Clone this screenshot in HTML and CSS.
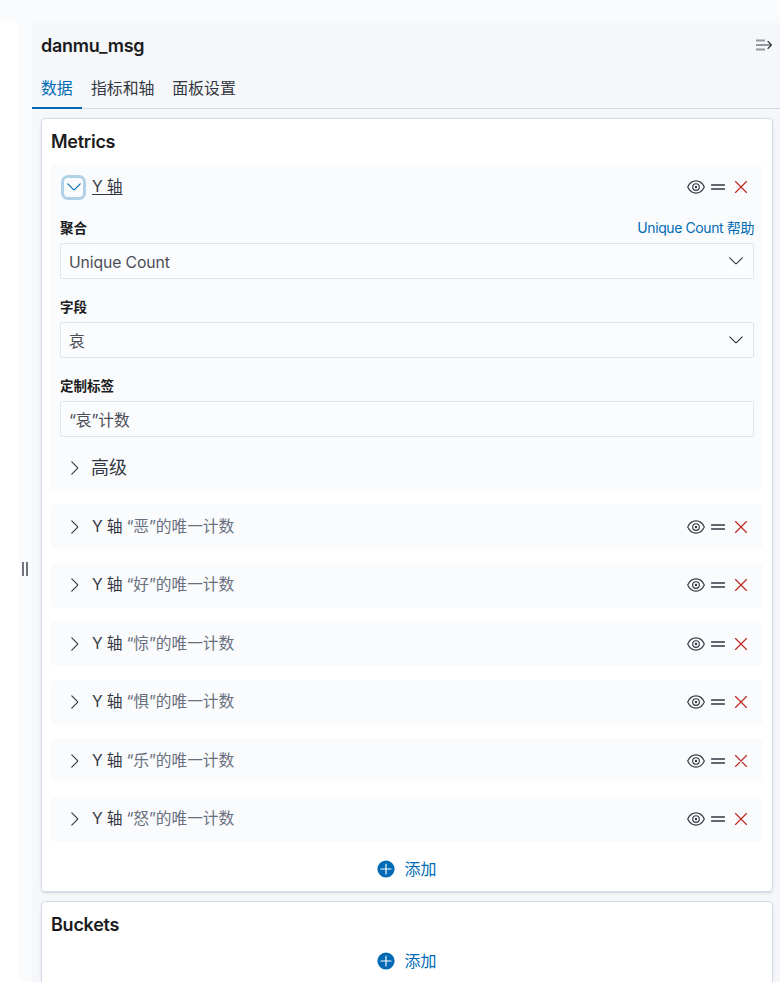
FILE: index.html
```html
<!DOCTYPE html>
<html lang="zh-CN">
<head>
<meta charset="utf-8">
<title>danmu_msg</title>
<link rel="stylesheet" href="styles.css">
</head>
<body>
<svg class="sprite" aria-hidden="true">
  <symbol id="eye" viewBox="0 0 18 18"><path d="M.7 9C2.4 5.2 5.4 2.9 9 2.9S15.600 5.200 17.300 9C15.600 12.800 12.600 15.100 9 15.100S2.400 12.800.7 9Z"/><circle cx="9" cy="9" r="3.300"/><circle cx="9" cy="9" r=".6"/></symbol>
  <symbol id="grab" viewBox="0 0 14 18"><path d="M.5 7h13M.5 11h13"/></symbol>
  <symbol id="cross" viewBox="0 0 12 12"><path d="M.5.5l11 11M11.500.5l-11 11"/></symbol>
  <symbol id="right" viewBox="0 0 8 14"><path d="M.8.8l5.500 5.500q.7.700 0 1.400L.8 13.200"/></symbol>
  <symbol id="down" viewBox="0 0 14 8"><path d="M.8.8l5.500 5.500q.7.700 1.400 0L13.200.8"/></symbol>
  <symbol id="plus" viewBox="0 0 18 18"><circle cx="9" cy="9" r="8.600" fill="#006bb4" stroke="none"/><path d="M9 4v10M4 9h10" stroke="#fff"/></symbol>
</svg>
<div class="page">
  <div class="resizer"><i></i><i></i></div>
  <aside class="sidebar">
    <header class="header">
      <h2>danmu_msg</h2>
      <svg class="collapse" viewBox="0 0 16 12"><path class="dim" d="M0 1.500h9M0 10.500h9"/><path d="M0 6h15.300M12 2.500L15.500 6 12 9.500"/></svg>
    </header>
    <nav class="tabs">
      <a class="tab active">数据</a><a class="tab">指标和轴</a><a class="tab">面板设置</a>
    </nav>
    <main class="content">
      <section class="card metrics">
        <h3>Metrics</h3>
        <div class="agg open">
          <div class="row"><span class="toggle focus"><svg class="down"><use href="#down"/></svg></span><span class="name">Y 轴</span><span class="actions"><svg class="eye"><use href="#eye"/></svg><svg class="grab"><use href="#grab"/></svg><svg class="cross"><use href="#cross"/></svg></span></div>
          <div class="field">
            <div class="label"><b>聚合</b><a>Unique Count 帮助</a></div>
            <div class="control">Unique Count<svg class="down"><use href="#down"/></svg></div>
          </div>
          <div class="field">
            <div class="label"><b>字段</b></div>
            <div class="control">哀<svg class="down"><use href="#down"/></svg></div>
          </div>
          <div class="field">
            <div class="label"><b>定制标签</b></div>
            <div class="control">“哀”计数</div>
          </div>
          <div class="advanced"><span class="toggle"><svg class="right"><use href="#right"/></svg></span>高级</div>
        </div>
        <div class="agg row"><span class="toggle"><svg class="right"><use href="#right"/></svg></span><span class="name">Y 轴</span><span class="desc">“恶”的唯一计数</span><span class="actions"><svg class="eye"><use href="#eye"/></svg><svg class="grab"><use href="#grab"/></svg><svg class="cross"><use href="#cross"/></svg></span></div>
        <div class="agg row"><span class="toggle"><svg class="right"><use href="#right"/></svg></span><span class="name">Y 轴</span><span class="desc">“好”的唯一计数</span><span class="actions"><svg class="eye"><use href="#eye"/></svg><svg class="grab"><use href="#grab"/></svg><svg class="cross"><use href="#cross"/></svg></span></div>
        <div class="agg row"><span class="toggle"><svg class="right"><use href="#right"/></svg></span><span class="name">Y 轴</span><span class="desc">“惊”的唯一计数</span><span class="actions"><svg class="eye"><use href="#eye"/></svg><svg class="grab"><use href="#grab"/></svg><svg class="cross"><use href="#cross"/></svg></span></div>
        <div class="agg row"><span class="toggle"><svg class="right"><use href="#right"/></svg></span><span class="name">Y 轴</span><span class="desc">“惧”的唯一计数</span><span class="actions"><svg class="eye"><use href="#eye"/></svg><svg class="grab"><use href="#grab"/></svg><svg class="cross"><use href="#cross"/></svg></span></div>
        <div class="agg row"><span class="toggle"><svg class="right"><use href="#right"/></svg></span><span class="name">Y 轴</span><span class="desc">“乐”的唯一计数</span><span class="actions"><svg class="eye"><use href="#eye"/></svg><svg class="grab"><use href="#grab"/></svg><svg class="cross"><use href="#cross"/></svg></span></div>
        <div class="agg row"><span class="toggle"><svg class="right"><use href="#right"/></svg></span><span class="name">Y 轴</span><span class="desc">“怒”的唯一计数</span><span class="actions"><svg class="eye"><use href="#eye"/></svg><svg class="grab"><use href="#grab"/></svg><svg class="cross"><use href="#cross"/></svg></span></div>
        <div class="add"><svg class="plus"><use href="#plus"/></svg>添加</div>
      </section>
      <section class="card buckets">
        <h3>Buckets</h3>
        <div class="add"><svg class="plus"><use href="#plus"/></svg>添加</div>
      </section>
    </main>
  </aside>
</div>
</body>
</html>
```
FILE: styles.css
```css
* { box-sizing: border-box; }
body {
  margin: 0;
  height: 982px;
  padding-top: 23px;
  overflow: hidden;
  background: #fafbfd;
  color: #343741;
  font: 15.75px/24px Inter, "Noto Sans CJK SC", sans-serif;
}
h2, h3 { margin: 0; color: #1a1c21; font-size: 18px; font-weight: 600; line-height: 27px; letter-spacing: -.25px; }
svg { flex: none; fill: none; stroke: #343741; stroke-width: 1.15; stroke-linecap: round; }
.sprite { display: none; }
.page { display: flex; height: 959px; border-left: 19px solid #fff; }
.resizer { width: 13px; display: flex; gap: 2px; padding: 539px 0 0 3px; }
.resizer i { width: 2px; height: 14px; background: #73757d; }
.sidebar { flex: 1; min-width: 0; background: #f5f7fa; }
.header { display: flex; justify-content: space-between; padding: 9px 8px 0 9px; height: 45px; }
.collapse { width: 16px; height: 12px; margin-top: 6.500px; }
.collapse .dim { stroke: #9699a1; stroke-width: 1.8; stroke-linecap: butt; }
.tabs { display: flex; height: 41px; border-bottom: 1px solid #d3dae6; }
.tab { height: 41px; padding: 9px 8.900px 0; font-size: 15.900px; line-height: 24px; }
.active { width: 50px; color: #006bb4; border-bottom: 2px solid #006bb4; }
.content { padding: 9px 7px 0 9px; }
.card {
  background: #fff;
  border: 1px solid #d3dae6;
  border-radius: 4px;
  padding: 9px;
  box-shadow: 0 2px 2px -1px rgba(152,162,179,.3), 0 1px 5px -2px rgba(152,162,179,.3);
}
.metrics { height: 774px; }
.buckets { height: 110px; margin-top: 9px; }
.card h3 { height: 36px; }
.agg { background: #fafbfd; border-radius: 5px; }
.agg.open { height: 326.500px; }
.agg + .agg { margin-top: 13.500px; }
.row { display: flex; align-items: center; height: 45px; padding: 0 16px 0 9px; }
.toggle { width: 28px; height: 24px; margin-right: 4px; padding-left: 1px; display: flex; align-items: center; justify-content: center; }
.focus { width: 25px; height: 25px; margin: 1px 6px 0 1px; padding: 0; border: 3px solid #b0d1e8; border-radius: 7px; }
.focus svg { stroke: #006bb4; }
.name { letter-spacing: -.15px; }
.open .name { text-decoration: underline; text-underline-offset: 2px; }
.desc { color: #69707d; margin-left: 4px; letter-spacing: -.08px; }
.actions { display: flex; align-items: center; margin-left: auto; }
.eye { width: 18px; height: 18px; margin-right: 6px; }
.grab { width: 14px; height: 18px; margin-right: 10px; stroke-width: 1.4; }
.cross { width: 12px; height: 12px; stroke: #bd271e; }
.right { width: 8px; height: 14px; }
.down { width: 14px; height: 8px; }
.field { margin: 0 9px 16px; }
.label { display: flex; justify-content: space-between; height: 34px; padding-top: 9px; font-size: 13.500px; line-height: 20px; color: #1a1c21; }
.field + .field .label { height: 27px; padding-top: 2px; }
.label a { color: #006bb4; font-size: 14px; letter-spacing: -.4px; }
.label b { font-weight: 700; }
.control { display: flex; align-items: center; justify-content: space-between; height: 36px; padding: 3px 10px 0 8px; border: 1px solid #e0e4ee; border-radius: 2px; background: #fbfcfd; color: #4b4e57; letter-spacing: -.12px; }
.control svg { margin-bottom: 3px; }
.advanced { display: flex; align-items: center; height: 28px; margin: 17px 9px 0; font-size: 18px; }
.advanced .toggle { margin-right: 3px; }
.add { display: flex; align-items: center; justify-content: center; height: 27px; margin-top: 13.500px; gap: 9px; color: #006bb4; font-size: 16px; }
.plus { width: 18px; height: 18px; }
.buckets .add { margin-top: 0; }
```
